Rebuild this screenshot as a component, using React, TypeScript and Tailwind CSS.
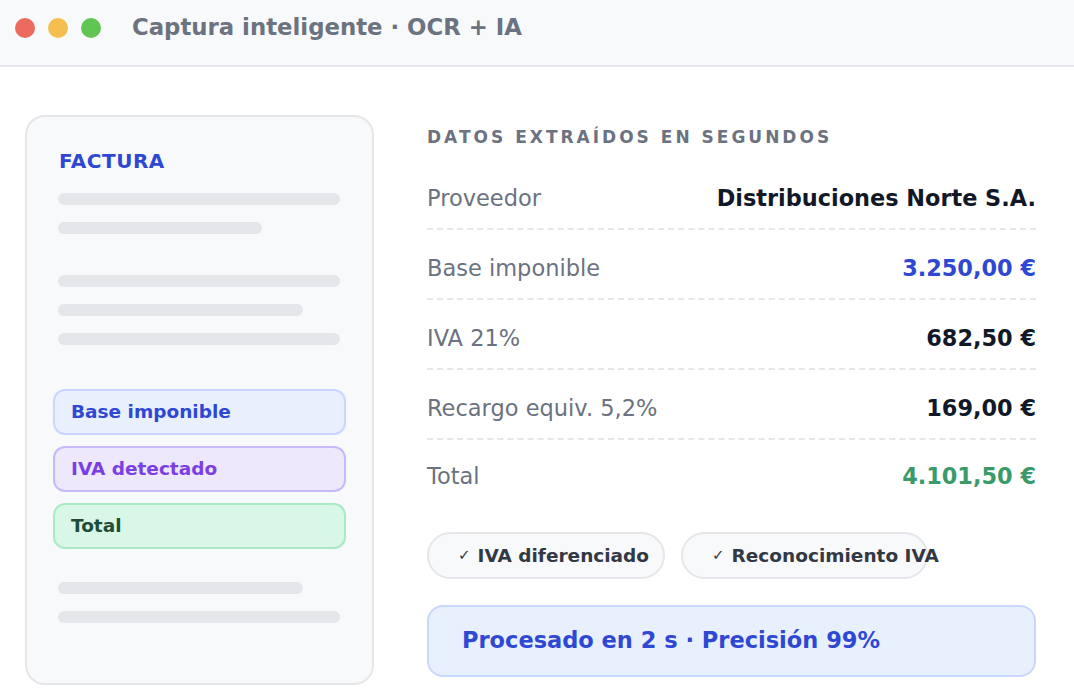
import React from 'react';

const FONT = { fontFamily: '"DejaVu Sans", "Liberation Sans", sans-serif' };

type Row = { label: string; value: string; tone: string };

const ROWS: Row[] = [
  { label: 'Proveedor', value: 'Distribuciones Norte S.A.', tone: 'text-[#111827]' },
  { label: 'Base imponible', value: '3.250,00 €', tone: 'text-[#2f48d4]' },
  { label: 'IVA 21%', value: '682,50 €', tone: 'text-[#111827]' },
  { label: 'Recargo equiv. 5,2%', value: '169,00 €', tone: 'text-[#111827]' },
  { label: 'Total', value: '4.101,50 €', tone: 'text-[#3a9a6a]' },
];

const Line: React.FC<{ short?: boolean; mid?: boolean }> = ({ short, mid }) => (
  <div
    className={`h-3 rounded-full bg-[#e5e6ea] ${short ? 'w-[204px]' : mid ? 'w-[245px]' : 'w-[282px]'}`}
  />
);

const Tag: React.FC<{ text: string; cls: string }> = ({ text, cls }) => (
  <div className={`h-[46px] flex items-center rounded-xl border-2 pl-[16px] text-[18.5px] font-bold ${cls}`}>
    {text}
  </div>
);

const Invoice = () => (
  <div className="w-[349px] h-[570px] shrink-0 rounded-[20px] border-2 border-[#e4e6ea] bg-[#f8f9fb] pt-[34px] px-[26px]">
    <div className="pl-[6px] text-[20px] font-bold tracking-[0.5px] text-[#2f48d4] leading-none">FACTURA</div>
    <div className="pl-[5px] mt-[22px] flex flex-col gap-[17px]">
      <Line />
      <Line short />
    </div>
    <div className="pl-[5px] mt-[41px] flex flex-col gap-[17px]">
      <Line />
      <Line mid />
      <Line />
    </div>
    <div className="mt-[44px] flex flex-col gap-[11px]">
      <Tag text="Base imponible" cls="bg-[#e8effd] border-[#c8d7fb] text-[#2f48d4]" />
      <Tag text="IVA detectado" cls="bg-[#ede8fb] border-[#c7b8fb] text-[#7b3fe4]" />
      <Tag text="Total" cls="bg-[#d9f7e6] border-[#a9eac5] text-[#1e4d3a]" />
    </div>
    <div className="pl-[5px] mt-[33px] flex flex-col gap-[17px]">
      <Line mid />
      <Line />
    </div>
  </div>
);

const Chip: React.FC<{ text: string; w: string }> = ({ text, w }) => (
  <div
    className={`${w} h-[47px] flex items-center whitespace-nowrap rounded-full border-2 border-[#e4e6ea] bg-[#f8f9fb] pl-[29px] text-[18.5px] font-bold text-[#333845]`}
  >
    <span className="text-[15px] mr-[7px]">✓</span>
    {text}
  </div>
);

export default function App() {
  return (
    <div className="w-[1074px] h-[688px] overflow-hidden bg-white" style={FONT}>
      <div className="h-[67px] flex items-center border-b-2 border-[#e4e6ea] bg-[#f8f9fb] pl-[15px] pb-[10px]">
        <div className="flex gap-[13px]">
          <span className="w-[20px] h-[20px] rounded-full bg-[#ec6a5e]" />
          <span className="w-[20px] h-[20px] rounded-full bg-[#f5bf4f]" />
          <span className="w-[20px] h-[20px] rounded-full bg-[#61c554]" />
        </div>
        <div className="ml-[31px] text-[22.8px] font-bold text-[#6b7280]">Captura inteligente · OCR + IA</div>
      </div>

      <div className="flex pl-[25px] pt-[48px] gap-[53px]">
        <Invoice />

        <div className="w-[609px] pt-[14px]">
          <div className="text-[17px] font-bold tracking-[3px] text-[#6b7280] leading-none">
            DATOS EXTRAÍDOS EN SEGUNDOS
          </div>
          <div className="mt-[14px]">
            {ROWS.map((r, i) => (
              <div
                key={r.label}
                className={`h-[70px] flex items-center justify-between ${
                  i < ROWS.length - 1 ? 'pt-[10px] border-b-2 border-dashed border-[#e6e7eb]' : 'pt-[4px]'
                }`}
              >
                <span className="text-[22.5px] text-[#6b7280]">{r.label}</span>
                <span className={`text-[22.4px] font-bold ${r.tone}`}>{r.value}</span>
              </div>
            ))}
          </div>
          <div className="mt-[22px] flex gap-[16px]">
            <Chip text="IVA diferenciado" w="w-[238px]" />
            <Chip text="Reconocimiento IVA" w="w-[247px]" />
          </div>
          <div className="mt-[26px] h-[72px] flex items-center rounded-[16px] border-2 border-[#c8d7fb] bg-[#e8effd] pl-[33px] text-[22.5px] font-bold text-[#2f48d4]">
            Procesado en 2 s · Precisión 99%
          </div>
        </div>
      </div>
    </div>
  );
}
